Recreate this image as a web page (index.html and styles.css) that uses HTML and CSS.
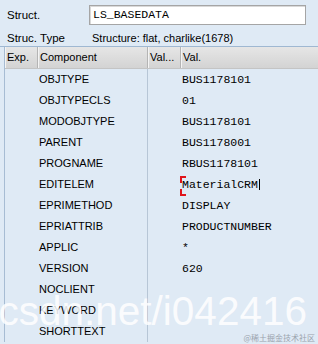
FILE: index.html
```html
<!DOCTYPE html>
<html lang="en">
<head>
  <meta charset="UTF-8">
  <title>Struct. LS_BASEDATA</title>
  <link rel="stylesheet" href="styles.css">
</head>
<body>
  <div class="screen">
    <!-- Header fields -->
    <div class="field-row first">
      <span class="label">Struct.</span>
      <div class="input">LS_BASEDATA</div>
    </div>
    <div class="field-row second">
      <span class="label">Struc. Type</span>
      <span class="value">Structure: flat, charlike(1678)</span>
    </div>

    <!-- Component table -->
    <div class="table">
      <div class="thead">
        <div class="th c-exp">Exp.</div>
        <div class="th c-comp">Component</div>
        <div class="th c-val1">Val...</div>
        <div class="th c-val2">Val.</div>
      </div>
      <div class="tbody">
        <div class="tr"><div class="td c-exp"></div><div class="td c-comp">OBJTYPE</div><div class="td c-val1"></div><div class="td c-val2 mono">BUS1178101</div></div>
        <div class="tr"><div class="td c-exp"></div><div class="td c-comp">OBJTYPECLS</div><div class="td c-val1"></div><div class="td c-val2 mono">01</div></div>
        <div class="tr"><div class="td c-exp"></div><div class="td c-comp">MODOBJTYPE</div><div class="td c-val1"></div><div class="td c-val2 mono">BUS1178101</div></div>
        <div class="tr"><div class="td c-exp"></div><div class="td c-comp">PARENT</div><div class="td c-val1"></div><div class="td c-val2 mono">BUS1178001</div></div>
        <div class="tr"><div class="td c-exp"></div><div class="td c-comp">PROGNAME</div><div class="td c-val1"></div><div class="td c-val2 mono">RBUS1178101</div></div>
        <div class="tr"><div class="td c-exp"></div><div class="td c-comp">EDITELEM</div><div class="td c-val1"></div><div class="td c-val2 mono"><span class="focus">MaterialCRM<span class="caret"></span></span></div></div>
        <div class="tr"><div class="td c-exp"></div><div class="td c-comp">EPRIMETHOD</div><div class="td c-val1"></div><div class="td c-val2 mono">DISPLAY</div></div>
        <div class="tr"><div class="td c-exp"></div><div class="td c-comp">EPRIATTRIB</div><div class="td c-val1"></div><div class="td c-val2 mono">PRODUCTNUMBER</div></div>
        <div class="tr"><div class="td c-exp"></div><div class="td c-comp">APPLIC</div><div class="td c-val1"></div><div class="td c-val2 mono">*</div></div>
        <div class="tr"><div class="td c-exp"></div><div class="td c-comp">VERSION</div><div class="td c-val1"></div><div class="td c-val2 mono">620</div></div>
        <div class="tr"><div class="td c-exp"></div><div class="td c-comp">NOCLIENT</div><div class="td c-val1"></div><div class="td c-val2 mono"></div></div>
        <div class="tr"><div class="td c-exp"></div><div class="td c-comp">KEYWORD</div><div class="td c-val1"></div><div class="td c-val2 mono"></div></div>
        <div class="tr"><div class="td c-exp"></div><div class="td c-comp">SHORTTEXT</div><div class="td c-val1"></div><div class="td c-val2 mono"></div></div>
      </div>
    </div>

    <!-- Watermarks -->
    <div class="watermark">blog.csdn.net/i042416</div>
    <div class="credit">@稀土掘金技术社区</div>
  </div>
</body>
</html>
```

FILE: styles.css
```css
* { margin: 0; padding: 0; box-sizing: border-box; }
html, body {
  width: 318px;
  height: 344px;
  overflow: hidden;
}
body {
  background: #dfeaf5;
  color: #000;
  font-family: "Liberation Sans", Arial, sans-serif;
  font-size: 11px;
}
.screen {
  position: relative;
  height: 344px;
  overflow: hidden;
}

/* Header fields */
.field-row {
  display: flex;
  align-items: center;
  padding-left: 7px;
}
.field-row.first {
  height: 29px;
  padding-top: 1px;
}
.field-row.second {
  height: 18px;
  border-bottom: 1px solid #9fb8d2;
}
.label {
  width: 82px;
  flex: none;
  font-size: 11.5px;
}
.input {
  width: 217px;
  height: 20px;
  background: #fff;
  border: 1px solid #a5a5a5;
  box-shadow: inset 1px 1px 0 #d9d9d9;
  font-family: "Liberation Mono", "Courier New", monospace;
  font-size: 11.5px;
  line-height: 18px;
  padding-left: 3px;
}
.value {
  padding-left: 3px;
}

/* Table */
.table {
  margin-left: 4px;
  border-left: 1px solid #a7bcd3;
}
.thead, .tr {
  display: grid;
  grid-template-columns: 33px 110px 33px 1fr;
}
.thead {
  height: 22px;
  background: linear-gradient(#e6e6e6, #d3d3d3);
  border-bottom: 1px solid #c4c4c4;
}
.th {
  line-height: 21px;
  padding-left: 2px;
  border-right: 1px solid #b4b4b4;
  box-shadow: inset 1px 0 0 #f4f4f4;
}
.th.c-val2 { border-right: none; }
.tr {
  height: 21px;
}
.td {
  line-height: 21px;
  white-space: nowrap;
}
.td.c-comp {
  padding-left: 1px;
  border-right: 1px solid #b7c6d6;
}
.td.c-val2 {
  padding-left: 1px;
}
.mono {
  font-family: "Liberation Mono", "Courier New", monospace;
  font-size: 11.5px;
}

/* Focus marker on the edited cell */
.focus {
  position: relative;
  display: inline-block;
}
.focus::before, .focus::after {
  content: "";
  position: absolute;
  left: -2px;
  width: 4px;
  height: 5px;
  border-left: 2px solid #e0141b;
}
.focus::before {
  top: 2px;
  border-top: 2px solid #e0141b;
}
.focus::after {
  bottom: -1px;
  border-bottom: 2px solid #e0141b;
}
.caret {
  position: absolute;
  right: -2px;
  top: 5px;
  width: 1px;
  height: 11px;
  background: #000;
}

/* Watermarks over the picture */
.watermark {
  position: absolute;
  right: 11px;
  top: 288px;
  font-family: "Liberation Sans", Arial, sans-serif;
  font-size: 40.5px;
  color: rgba(255, 255, 255, 0.85);
  white-space: nowrap;
}
.credit {
  position: absolute;
  right: 3px;
  bottom: 1px;
  font-family: "Noto Sans CJK SC", sans-serif;
  font-size: 8px;
  color: #9aa3ad;
}
```
